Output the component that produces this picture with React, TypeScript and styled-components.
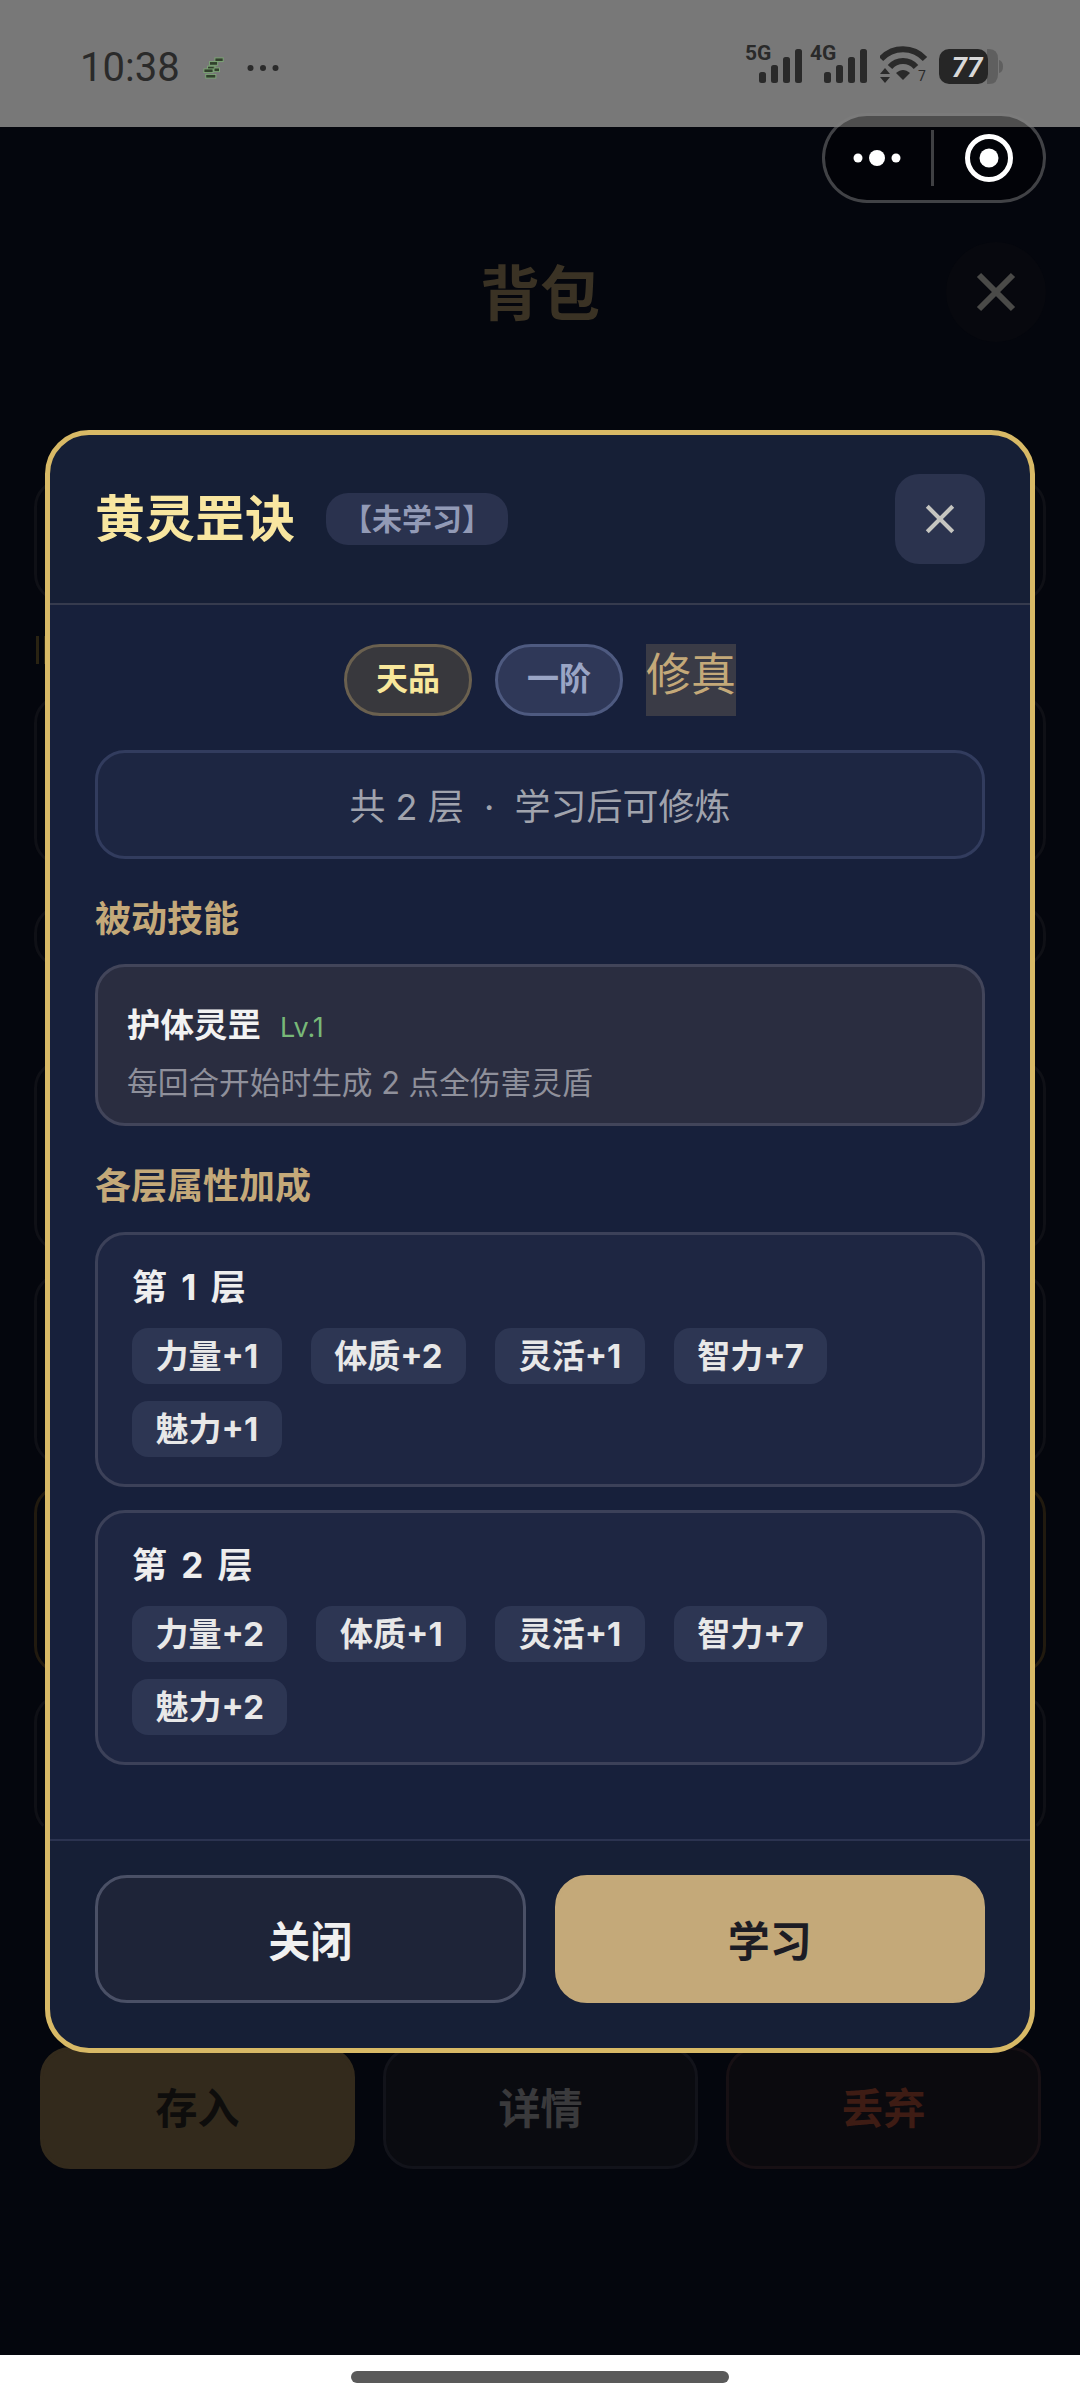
import styled, { createGlobalStyle } from 'styled-components';

const GlobalStyle = createGlobalStyle`
  html, body {
    margin: 0;
    padding: 0;
    background: #ffffff;
  }
  * {
    box-sizing: border-box;
  }
`;

const Page = styled.div`
  position: relative;
  width: 1080px;
  height: 2400px;
  overflow: hidden;
  display: flex;
  flex-direction: column;
  font-family: Inter, 'Noto Sans CJK SC', 'Noto Sans', sans-serif;
`;

const StatusBar = styled.div`
  flex: 0 0 127px;
  background: #787878;
  display: flex;
  align-items: center;
  justify-content: space-between;
  padding: 0 77px 0 80px;
`;

const StatusLeft = styled.div`
  display: flex;
  align-items: center;
  gap: 22px;
  margin-top: 8px;
`;

const Time = styled.span`
  font-family: Roboto, sans-serif;
  font-size: 40px;
  color: #2a2a2a;
  width: 101px;
`;

const StatusIcons = styled.div`
  display: flex;
  align-items: flex-end;
  height: 46px;
  margin-top: -6px;
`;

const Capsule = styled.div`
  position: absolute;
  top: 113px;
  left: 822px;
  width: 224px;
  height: 90px;
  border: 3px solid rgba(255, 255, 255, 0.25);
  border-radius: 45px;
  background: rgba(0, 0, 0, 0.35);
  display: flex;
  align-items: center;
  z-index: 3;
`;

const CapsuleSide = styled.div<{ $narrow?: boolean }>`
  flex: ${(p) => (p.$narrow ? '0 0 106px' : '1')};
  padding-right: ${(p) => (p.$narrow ? '3px' : '0')};
  display: flex;
  align-items: center;
  justify-content: center;
`;

const CapsuleDivider = styled.div`
  width: 3px;
  height: 56px;
  background: #3f4043;
`;

const Screen = styled.div`
  position: relative;
  flex: 1;
  background: #04060d;
  overflow: hidden;
`;

const GhostLayer = styled.div`
  padding: 105px 34px 0;
  display: flex;
  flex-direction: column;
`;

const GhostHeader = styled.div`
  height: 120px;
  display: grid;
  grid-template-columns: 1fr auto 1fr;
  align-items: center;
`;

const GhostTitle = styled.div`
  grid-column: 2;
  font-size: 60px;
  font-weight: 700;
  color: #3a3224;
  padding-bottom: 6px;
`;

const GhostClose = styled.div`
  grid-column: 3;
  justify-self: end;
  width: 100px;
  height: 100px;
  border-radius: 50%;
  background: #07080e;
  display: flex;
  align-items: center;
  justify-content: center;
`;

const GhostCard = styled.div<{ $h: number; $top: number; $gold?: boolean; $open?: boolean }>`
  height: ${(p) => p.$h}px;
  margin-top: ${(p) => p.$top}px;
  border: 3px solid ${(p) => (p.$gold ? '#211a0f' : '#0f1016')};
  border-bottom-color: ${(p) => (p.$open ? 'transparent' : p.$gold ? '#211a0f' : '#0f1016')};
  border-radius: 28px;
`;

const GhostTick = styled.div`
  width: 11px;
  height: 28px;
  margin: 34px 0 0 2px;
  border-left: 3px solid #2a2312;
  border-right: 3px solid #2a2312;
`;

const GhostActions = styled.div`
  display: grid;
  grid-template-columns: repeat(3, 315px);
  gap: 28px;
  margin: 212px 0 0 6px;
`;

const GhostButton = styled.div<{ $kind: 'gold' | 'plain' | 'danger' }>`
  height: 122px;
  padding-bottom: 6px;
  border-radius: 30px;
  border: 3px solid
    ${(p) => (p.$kind === 'gold' ? '#332a1c' : p.$kind === 'danger' ? '#171014' : '#12131a')};
  background: ${(p) => (p.$kind === 'gold' ? '#332a1c' : p.$kind === 'danger' ? '#0b0a0e' : '#0a0b10')};
  color: ${(p) => (p.$kind === 'gold' ? '#0e0d0c' : p.$kind === 'danger' ? '#3e1c14' : '#3a3a3c')};
  display: flex;
  align-items: center;
  justify-content: center;
  font-size: 42px;
  font-weight: 700;
`;

const Overlay = styled.div`
  position: absolute;
  inset: 0;
  display: flex;
  align-items: center;
  justify-content: center;
`;

const Modal = styled.div`
  width: 990px;
  border: 5px solid #d8b966;
  border-radius: 44px;
  background: #161f36;
  display: flex;
  flex-direction: column;
  overflow: hidden;
`;

const ModalHeader = styled.div`
  display: flex;
  align-items: center;
  padding: 39px 45px;
  border-bottom: 2px solid #363b4e;
`;

const ModalTitle = styled.div`
  font-size: 50px;
  font-weight: 700;
  line-height: 64px;
  color: #f8e6a0;
`;

const StateBadge = styled.div`
  margin-left: 31px;
  height: 52px;
  padding: 0 16px;
  border-radius: 22px;
  background: #2a324e;
  color: #929ab6;
  font-size: 30px;
  font-weight: 700;
  line-height: 52px;
`;

const CloseButton = styled.div`
  margin-left: auto;
  width: 90px;
  height: 90px;
  border-radius: 24px;
  background: #2b334e;
  display: flex;
  align-items: center;
  justify-content: center;
`;

const ModalBody = styled.div`
  background: #17203b;
  padding: 39px 45px 74px;
  display: flex;
  flex-direction: column;
`;

const TagRow = styled.div`
  display: flex;
  justify-content: center;
  gap: 23px;
`;

const Tag = styled.div<{ $kind: 'grade' | 'rank' }>`
  height: 72px;
  padding: 0 29px;
  border-radius: 36px;
  border: 3px solid ${(p) => (p.$kind === 'grade' ? '#6a604f' : '#4e5a80')};
  background: ${(p) => (p.$kind === 'grade' ? '#38383d' : '#2f3858')};
  color: ${(p) => (p.$kind === 'grade' ? '#f8e79b' : '#9aa5c5')};
  font-size: 32px;
  font-weight: 700;
  line-height: 64px;
`;

const PlainTag = styled.div`
  height: 72px;
  background: #3a3b46;
  color: #c4a979;
  font-size: 45px;
  line-height: 62px;
`;

const InfoBox = styled.div`
  margin-top: 34px;
  height: 109px;
  border: 3px solid #323c5e;
  border-radius: 30px;
  background: #1d2642;
  color: #a0a3ad;
  font-size: 36px;
  display: flex;
  align-items: center;
  justify-content: center;
`;

const SectionTitle = styled.div<{ $after: number }>`
  margin: 35px 0 ${(p) => p.$after}px;
  font-size: 36px;
  font-weight: 700;
  line-height: 50px;
  color: #c4a979;
`;

const SkillCard = styled.div`
  height: 162px;
  border: 3px solid #42455a;
  border-radius: 30px;
  background: #2a2d40;
  padding: 34px 29px 0;
`;

const SkillHead = styled.div`
  display: flex;
  align-items: baseline;
  gap: 19px;
  line-height: 48px;
`;

const SkillName = styled.span`
  font-size: 33.5px;
  font-weight: 700;
  color: #f2f2f2;
`;

const SkillLevel = styled.span`
  font-size: 27px;
  color: #78b878;
`;

const SkillText = styled.div`
  margin-top: 9px;
  font-size: 30.7px;
  line-height: 44px;
  color: #8f909b;
`;

const LayerCard = styled.div`
  height: 255px;
  border: 3px solid #3c4159;
  border-radius: 30px;
  background: #1e2642;
  padding: 29px 34px 0;
  & + & {
    margin-top: 23px;
  }
`;

const LayerTitle = styled.div`
  font-size: 35px;
  font-weight: 700;
  line-height: 46px;
  word-spacing: 6px;
  color: #eeeeee;
`;

const ChipRow = styled.div`
  margin-top: 18px;
  display: flex;
  flex-wrap: wrap;
  gap: 17px 29px;
  width: 760px;
`;

const Chip = styled.div`
  height: 56px;
  padding: 0 23.5px;
  border-radius: 16px;
  background: #2d3653;
  color: #e8e8e8;
  font-size: 33px;
  font-weight: 700;
  line-height: 56px;
`;

const ModalFooter = styled.div`
  border-top: 2px solid #2b3350;
  padding: 34px 45px 45px;
  display: flex;
  gap: 29px;
`;

const FooterButton = styled.div<{ $primary?: boolean }>`
  flex: 1;
  height: 128px;
  border-radius: 32px;
  border: 3px solid ${(p) => (p.$primary ? '#c4a979' : '#4a5066')};
  background: ${(p) => (p.$primary ? '#c4a979' : '#1e2438')};
  color: ${(p) => (p.$primary ? '#1c1c24' : '#f0f0f0')};
  font-size: 42px;
  font-weight: 700;
  display: flex;
  align-items: center;
  justify-content: center;
`;

const HomeArea = styled.div`
  flex: 0 0 45px;
  background: #ffffff;
  display: flex;
  justify-content: center;
  padding-top: 16px;
`;

const HomeBar = styled.div`
  width: 378px;
  height: 12px;
  border-radius: 6px;
  background: #5a5a5a;
`;

const CrossIcon = ({ size, color, stroke }: { size: number; color: string; stroke: number }) => (
	<svg width={size} height={size} viewBox="0 0 40 40">
		<path d="M3 3 L37 37 M37 3 L3 37" stroke={color} strokeWidth={stroke} fill="none" />
	</svg>
);

const SignalIcon = ({ label, width }: { label: string; width: number }) => (
	<svg width={width} height={42} viewBox={`0 0 ${width} 42`}>
		<text x="0" y="18" fontSize="21" fontWeight="700" fontFamily="Roboto, sans-serif" fill="#2a2a2a">
			{label}
		</text>
		<rect x="14" y="30" width="7" height="11" rx="2.5" fill="#2a2a2a" />
		<rect x="26" y="23" width="7" height="18" rx="2.5" fill="#2a2a2a" />
		<rect x="38" y="15" width="7" height="26" rx="2.5" fill="#2a2a2a" />
		<rect x="50" y="7" width="7" height="34" rx="2.5" fill="#2a2a2a" />
	</svg>
);

const WifiIcon = () => (
	<svg width={48} height={46} viewBox="0 -4 48 46">
		<path d="M1 17 C13 4 33 4 45 17" stroke="#2a2a2a" strokeWidth="6" fill="none" />
		<path d="M10 25 C17 17 29 17 36 25" stroke="#2a2a2a" strokeWidth="6" fill="none" />
		<path d="M16 31 C21 27 25 27 30 31 L23 38 Z" fill="#2a2a2a" />
		<path d="M5 26 L10 32 L0 32 Z M0 35 L10 35 L5 41 Z" fill="#2a2a2a" />
		<text x="38" y="39" fontSize="14" fontFamily="Roboto, sans-serif" fill="#2a2a2a">
			7
		</text>
	</svg>
);

const BatteryIcon = () => (
	<svg width={64} height={35} viewBox="0 0 64 35">
		<path d="M48 0 H50 Q59 0 59 10 V25 Q59 35 50 35 H48 Z" fill="#5f5f5f" />
		<path d="M60 11 Q64 12 64 17.5 Q64 23 60 24 Z" fill="#5f5f5f" />
		<rect x="0" y="0" width="49" height="35" rx="10" fill="#262626" />
		<text x="28" y="28" textAnchor="middle" fontSize="28" fontWeight="700" fontStyle="italic" fontFamily="Roboto, sans-serif" fill="#d8d8d8">
			77
		</text>
	</svg>
);

const layers = [
	{ name: '第 1 层', stats: ['力量+1', '体质+2', '灵活+1', '智力+7', '魅力+1'] },
	{ name: '第 2 层', stats: ['力量+2', '体质+1', '灵活+1', '智力+7', '魅力+2'] },
];

export default function App() {
	return (
		<Page>
			<GlobalStyle />
			<StatusBar>
				<StatusLeft>
					<Time>10:38</Time>
					<svg width={22} height={22} viewBox="0 0 24 24">
						<g fill="#31402c" stroke="#7fa878" strokeWidth="1">
							<rect x="13" y="1" width="9" height="4" />
							<rect x="7" y="5" width="9" height="4" />
							<rect x="5" y="10" width="8" height="4" />
							<rect x="1" y="13" width="10" height="4" />
							<rect x="12" y="12" width="6" height="4" />
							<rect x="3" y="19" width="11" height="4" />
						</g>
					</svg>
					<svg width={32} height={8} viewBox="0 0 32 8">
						<circle cx="3.5" cy="4" r="3" fill="#2a2a2a" />
						<circle cx="16" cy="4" r="3" fill="#2a2a2a" />
						<circle cx="28.5" cy="4" r="3" fill="#2a2a2a" />
					</svg>
				</StatusLeft>
				<StatusIcons>
					<SignalIcon label="5G" width={65} />
					<SignalIcon label="4G" width={70} />
					<WifiIcon />
					<svg width={11} height={1} />
					<BatteryIcon />
				</StatusIcons>
			</StatusBar>
			<Capsule>
				<CapsuleSide $narrow>
					<svg width={48} height={18} viewBox="0 0 48 18">
						<circle cx="5" cy="9" r="4.5" fill="#ffffff" />
						<circle cx="24" cy="9" r="8" fill="#ffffff" />
						<circle cx="43" cy="9" r="4.5" fill="#ffffff" />
					</svg>
				</CapsuleSide>
				<CapsuleDivider />
				<CapsuleSide>
					<svg width={50} height={50} viewBox="0 0 50 50">
						<circle cx="25" cy="25" r="21.5" fill="none" stroke="#ffffff" strokeWidth="5" />
						<circle cx="25" cy="25" r="9.5" fill="#ffffff" />
					</svg>
				</CapsuleSide>
			</Capsule>
			<Screen>
				<GhostLayer>
					<GhostHeader>
						<GhostTitle>背包</GhostTitle>
						<GhostClose>
							<CrossIcon size={40} color="#4a4a48" stroke={6} />
						</GhostClose>
					</GhostHeader>
					<GhostCard $h={123} $top={127} />
					<GhostTick />
					<GhostCard $h={171} $top={31} />
					<GhostCard $h={63} $top={39} />
					<GhostCard $h={192} $top={92} />
					<GhostCard $h={192} $top={21} />
					<GhostCard $h={189} $top={20} $gold />
					<GhostCard $h={141} $top={20} $open />
					<GhostActions>
						<GhostButton $kind="gold">存入</GhostButton>
						<GhostButton $kind="plain">详情</GhostButton>
						<GhostButton $kind="danger">丢弃</GhostButton>
					</GhostActions>
				</GhostLayer>
				<Overlay>
					<Modal>
						<ModalHeader>
							<ModalTitle>黄灵罡诀</ModalTitle>
							<StateBadge>【未学习】</StateBadge>
							<CloseButton>
								<CrossIcon size={30} color="#c5c5c0" stroke={5.5} />
							</CloseButton>
						</ModalHeader>
						<ModalBody>
							<TagRow>
								<Tag $kind="grade">天品</Tag>
								<Tag $kind="rank">一阶</Tag>
								<PlainTag>修真</PlainTag>
							</TagRow>
							<InfoBox>共 2 层&nbsp;&nbsp;·&nbsp;&nbsp;学习后可修炼</InfoBox>
							<SectionTitle $after={20}>被动技能</SectionTitle>
							<SkillCard>
								<SkillHead>
									<SkillName>护体灵罡</SkillName>
									<SkillLevel>Lv.1</SkillLevel>
								</SkillHead>
								<SkillText>每回合开始时生成 2 点全伤害灵盾</SkillText>
							</SkillCard>
							<SectionTitle $after={21}>各层属性加成</SectionTitle>
							{layers.map((layer) => (
								<LayerCard key={layer.name}>
									<LayerTitle>{layer.name}</LayerTitle>
									<ChipRow>
										{layer.stats.map((stat) => (
											<Chip key={stat}>{stat}</Chip>
										))}
									</ChipRow>
								</LayerCard>
							))}
						</ModalBody>
						<ModalFooter>
							<FooterButton>关闭</FooterButton>
							<FooterButton $primary>学习</FooterButton>
						</ModalFooter>
					</Modal>
				</Overlay>
			</Screen>
			<HomeArea>
				<HomeBar />
			</HomeArea>
		</Page>
	);
}
